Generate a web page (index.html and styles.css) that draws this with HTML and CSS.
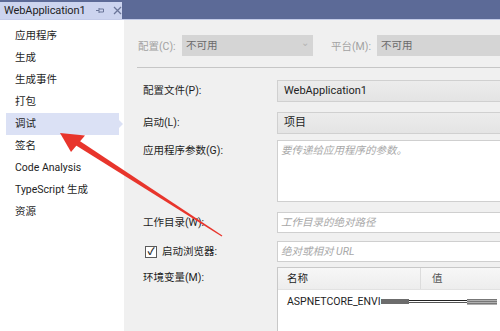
FILE: index.html
```html
<!DOCTYPE html>
<html lang="zh-CN">
<head>
  <meta charset="UTF-8" />
  <title>WebApplication1</title>
  <link rel="stylesheet" href="styles.css">
</head>
<body>

  <!-- 文档标签栏 -->
  <div class="titlebar">
    <div class="tab">
      <span class="tab-name">WebApplication1</span>
      <svg class="tab-pin" width="9" height="9" viewBox="0 0 9 9">
        <path d="M0 4.5h3M3 2v5M3 3h4.5v3H3" fill="none" stroke="#6b7699" stroke-width="1"/>
      </svg>
      <svg class="tab-close" width="9" height="9" viewBox="0 0 9 9">
        <path d="M1 1l7 7M8 1l-7 7" stroke="#6b7699" stroke-width="1.3"/>
      </svg>
    </div>
  </div>

  <div class="main">
    <!-- 左侧导航 -->
    <div class="sidebar">
      <div class="nav-item">应用程序</div>
      <div class="nav-item">生成</div>
      <div class="nav-item">生成事件</div>
      <div class="nav-item">打包</div>
      <div class="nav-item active">调试</div>
      <div class="nav-item">签名</div>
      <div class="nav-item">Code Analysis</div>
      <div class="nav-item">TypeScript 生成</div>
      <div class="nav-item">资源</div>
    </div>

    <!-- 属性页 -->
    <div class="content">
      <div class="config-bar">
        <span class="dim-label">配置(C):</span>
        <div class="dim-select cfg">不可用<span class="chev">&#8964;</span></div>
        <span class="dim-label plat">平台(M):</span>
        <div class="dim-select">不可用</div>
      </div>

      <div class="form">
        <div class="row r1">
          <label class="lbl">配置文件(P):</label>
          <div class="select">WebApplication1</div>
        </div>
        <div class="row r2">
          <label class="lbl">启动(L):</label>
          <div class="select">项目</div>
        </div>
        <div class="row r3">
          <label class="lbl">应用程序参数(G):</label>
          <div class="textbox tall"><span class="ph">要传递给应用程序的参数。</span></div>
        </div>
        <div class="row r4">
          <label class="lbl">工作目录(W):</label>
          <div class="textbox"><span class="ph">工作目录的绝对路径</span></div>
        </div>
        <div class="row r5">
          <label class="lbl check-lbl"><span class="checkbox">&#10003;</span>启动浏览器:</label>
          <div class="textbox"><span class="ph">绝对或相对 URL</span></div>
        </div>
        <div class="row">
          <label class="lbl">环境变量(M):</label>
          <div class="env-grid">
            <div class="env-head">
              <span class="col-name">名称</span>
              <span class="col-value">值</span>
            </div>
            <div class="env-row">
              <span class="env-key">ASPNETCORE_ENVI</span>
              <span class="redact">
                <span class="r-dark"></span>
                <span class="r-lines"></span>
                <span class="r-grey"></span>
              </span>
            </div>
          </div>
        </div>
      </div>
    </div>
  </div>

  <!-- 红色箭头标注 -->
  <svg class="arrow" width="500" height="331" viewBox="0 0 500 331">
    <polygon points="74.5,144.5 77.5,139.5 222.3,235.6 221.7,236.4" fill="#e8352c"/>
    <polygon points="60,133 85,135.5 71,152" fill="#e8352c"/>
  </svg>

</body>
</html>
```

FILE: styles.css
```css
* {
  box-sizing: border-box;
  margin: 0;
  padding: 0;
}

html, body {
  overflow: hidden;
}

body {
  height: 331px;
  position: relative;
  font-family: Roboto, "Noto Sans CJK SC", sans-serif;
  font-size: 10.5px;
  color: #1e1e1e;
  background: #f0f0f0;
}

/* 标签栏 */
.titlebar {
  height: 20px;
  background: #5c6a97;
  border-bottom: 1px solid #c3cbe8;
  padding-top: 2px;
}

.tab {
  width: 122px;
  height: 17px;
  background: #ccd4ef;
  display: flex;
  align-items: center;
  padding-left: 4px;
  white-space: nowrap;
}

.tab-name {
  font-size: 11px;
  line-height: 17px;
  letter-spacing: -0.1px;
  color: #1e1e1e;
}

.tab-pin {
  margin-left: 10px;
}

.tab-close {
  margin-left: 8px;
}

.main {
  display: flex;
  height: 311px;
}

/* 左侧导航 */
.sidebar {
  width: 124px;
  flex-shrink: 0;
  background: #fff;
  padding-top: 5px;
}

.nav-item {
  height: 22px;
  line-height: 22px;
  padding-left: 15px;
  position: relative;
}

.nav-item.active {
  background: #dbe1f5;
  margin: 0 5px 0 6px;
  padding-left: 9px;
}

.nav-item.active::after {
  content: "";
  position: absolute;
  right: -4px;
  top: 7px;
  border-top: 4px solid transparent;
  border-bottom: 4px solid transparent;
  border-left: 4px solid #dbe1f5;
}

/* 右侧内容 */
.content {
  flex: 1;
  min-width: 0;
  overflow: hidden;
}

.config-bar {
  display: flex;
  align-items: center;
  margin-left: 13px;
  padding: 15px 0 11px 1px;
  border-bottom: 1px solid #c6c6c6;
  white-space: nowrap;
}

.dim-label {
  color: #a2a2a2;
  width: 44px;
  flex-shrink: 0;
}

.dim-label.plat {
  margin-left: 18px;
  width: 46px;
}

.dim-select {
  height: 21px;
  line-height: 21px;
  background: #d5d5d5;
  color: #6a6a6a;
  padding-left: 4px;
  width: 160px;
  flex-shrink: 0;
  position: relative;
}

.dim-select.cfg {
  width: 131px;
}

.chev {
  position: absolute;
  right: 4px;
  top: -3px;
  color: #b4b4b4;
  font-size: 10px;
}

.form {
  padding: 12px 0 0 19px;
}

.row {
  display: flex;
  margin-bottom: 8px;
}

.row.r1 { margin-bottom: 10px; }
.row.r2 { margin-bottom: 6px; }
.row.r3 { margin-bottom: 10px; }
.row.r5 { margin-bottom: 5px; }

.lbl {
  width: 134px;
  flex-shrink: 0;
  line-height: 21px;
}

.select {
  width: 280px;
  flex-shrink: 0;
  height: 22px;
  line-height: 20px;
  padding-left: 6px;
  background: linear-gradient(#ececec, #e4e4e4);
  border: 1px solid #d0d0d0;
  font-size: 11px;
}

.textbox {
  width: 280px;
  flex-shrink: 0;
  height: 21px;
  line-height: 19px;
  padding-left: 3px;
  background: #fff;
  border: 1px solid #cfcfcf;
}

.textbox.tall {
  height: 62px;
}

.ph {
  font-style: italic;
  color: #a8a8a8;
}

.check-lbl {
  display: flex;
  align-items: center;
}

.checkbox {
  width: 12px;
  height: 12px;
  border: 1px solid #5a5a5a;
  background: #fff;
  font-size: 10px;
  font-weight: bold;
  line-height: 10px;
  text-align: center;
  margin: 0 5px 0 2px;
}

/* 环境变量表格 */
.env-grid {
  width: 280px;
  flex-shrink: 0;
  height: 70px;
  background: #fff;
  border: 1px solid #c8c8c8;
  border-right: none;
  border-bottom: none;
}

.env-head {
  display: flex;
  height: 22px;
  line-height: 22px;
  background: linear-gradient(#f7f7f7, #ededed);
  border-bottom: 1px solid #e2e2e2;
}

.col-name {
  width: 143px;
  padding-left: 9px;
  border-right: 1px solid #dcdcdc;
}

.col-value {
  padding-left: 11px;
  color: #555;
}

.env-row {
  display: flex;
  align-items: center;
  height: 21px;
  padding-left: 9px;
  margin-top: 1px;
}

.redact {
  display: flex;
  align-items: center;
}

.r-dark {
  width: 28px;
  height: 5px;
  background: #6c6c6c;
}

.r-lines {
  width: 58px;
  height: 3px;
  border-top: 1px solid #222;
  border-bottom: 1px solid #555;
}

.r-grey {
  width: 30px;
  height: 6px;
  background: repeating-linear-gradient(#777 0 1px, #b0b0b0 1px 2px);
}

/* 标注箭头 */
.arrow {
  position: absolute;
  left: 0;
  top: 0;
  pointer-events: none;
}
```
